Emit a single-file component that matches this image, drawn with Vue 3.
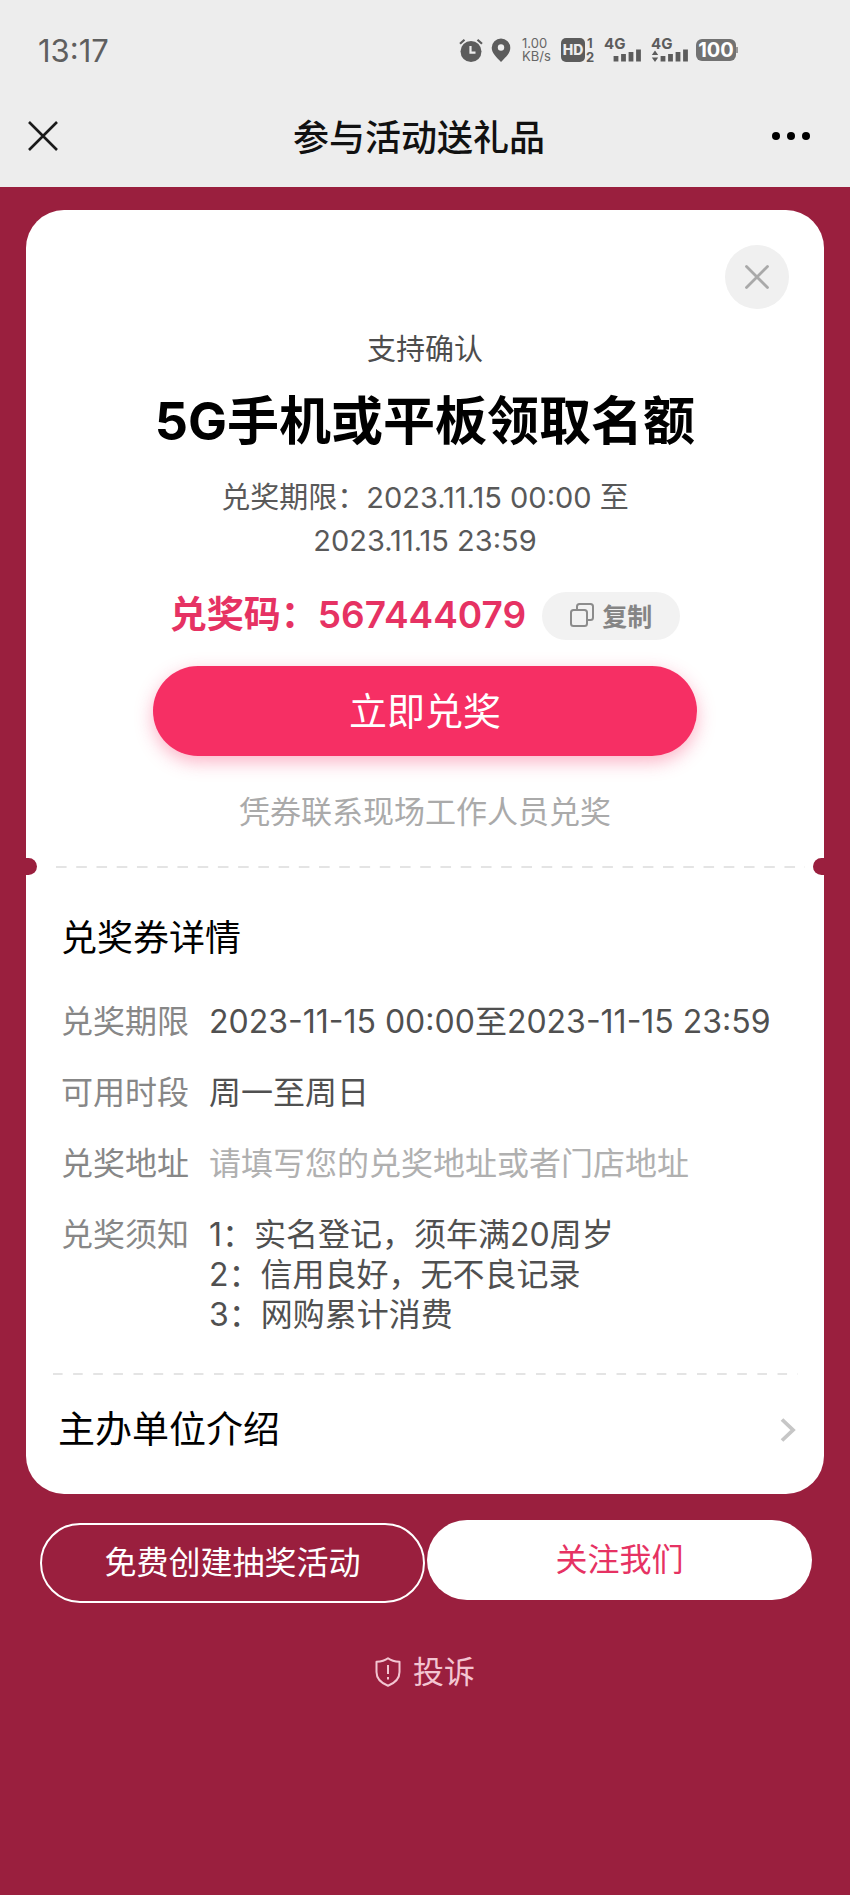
<script setup>
const details = [
  { label: '兑奖期限', lines: ['2023-11-15 00:00至2023-11-15 23:59'], kind: 'plain' },
  { label: '可用时段', lines: ['周一至周日'], kind: 'plain' },
  { label: '兑奖地址', lines: ['请填写您的兑奖地址或者门店地址'], kind: 'muted' },
  {
    label: '兑奖须知',
    lines: ['1：实名登记，须年满20周岁', '2：信用良好，无不良记录', '3：网购累计消费'],
    kind: 'plain'
  }
]
</script>

<template>
  <div class="page">
    <header class="top">
      <div class="status">
        <span class="clock">13:17</span>
        <div class="indicators">
          <svg class="alarm" viewBox="0 0 24 24" width="24" height="24" aria-hidden="true">
            <circle cx="12" cy="13.500" r="10.500" fill="#5c5c5c" />
            <path d="M1 5.800 5.500 1.800M23 5.800 18.500 1.800" stroke="#5c5c5c" stroke-width="2.200" fill="none" />
            <path d="M11.500 8v6.700h5" stroke="#ededed" stroke-width="2.200" fill="none" />
          </svg>
          <svg class="pin" viewBox="0 0 20 24" width="20" height="24" aria-hidden="true">
            <path d="M10 .5a9.300 9.300 0 0 0-9.300 9.300C.7 15.500 6 19.500 10 24c4-4.500 9.300-8.500 9.300-14.200A9.300 9.300 0 0 0 10 .5z" fill="#5c5c5c" />
            <circle cx="10" cy="9.500" r="3.200" fill="#ededed" />
          </svg>
          <span class="speed"><span>1.00</span><span>KB/s</span></span>
          <svg class="hd" viewBox="0 -4 36 32" width="36" height="32">
            <rect x="0" y="0" width="24" height="24" rx="5" fill="#5c5c5c" />
            <text x="12" y="17" text-anchor="middle" class="hd-label">HD</text>
            <text x="26" y="10" class="sim">1</text>
            <text x="25" y="24" class="sim">2</text>
          </svg>
          <svg class="signal" viewBox="0 -4 38 32" width="38" height="32">
            <text x="0" y="11" class="net">4G</text>
            <path d="M12 18v5.500M19.500 16v7.500M27 14v9.500M34.500 11.500v12" stroke="#5c5c5c" stroke-width="4.800" />
          </svg>
          <svg class="signal" viewBox="0 -4 38 32" width="38" height="32">
            <text x="0" y="11" class="net">4G</text>
            <path d="M4 12.500.8 17h6.400zM4 24 .8 19.500h6.400z" fill="#5c5c5c" />
            <path d="M12 18v5.500M19.500 16v7.500M27 14v9.500M34.500 11.500v12" stroke="#5c5c5c" stroke-width="4.800" />
          </svg>
          <span class="battery">100</span>
        </div>
      </div>
      <div class="nav">
        <button class="nav-close" type="button" aria-label="关闭">
          <svg viewBox="0 0 30 30" width="30" height="30"><path d="M1 1l28 28M29 1 1 29" stroke="#1a1a1a" stroke-width="2.600" /></svg>
        </button>
        <h1>参与活动送礼品</h1>
        <button class="nav-more" type="button" aria-label="更多">
          <svg viewBox="0 0 38 8" width="38" height="8"><circle cx="4" cy="4" r="4" /><circle cx="19" cy="4" r="4" /><circle cx="34" cy="4" r="4" /></svg>
        </button>
      </div>
    </header>

    <main>
      <article class="card">
        <section class="coupon">
          <button class="dismiss" type="button" aria-label="关闭">
            <svg viewBox="0 0 24 24" width="24" height="24"><path d="M1.500 1.500l21 21M22.500 1.500l-21 21" stroke="#a9a9a9" stroke-width="2.800" stroke-linecap="round" /></svg>
          </button>
          <p class="kicker">支持确认</p>
          <h2>5G手机或平板领取名额</h2>
          <p class="period">兑奖期限：2023.11.15 00:00 至<br />2023.11.15 23:59</p>
          <div class="code-row">
            <span class="code">兑奖码：567444079</span>
            <button class="copy" type="button">
              <svg viewBox="0 0 24 24" width="24" height="24" fill="none" stroke="#8c8c8c" stroke-width="2">
                <rect x="1" y="7" width="16" height="16" rx="2.500" />
                <path d="M7 7V3.500Q7 1 9.500 1h11Q23 1 23 3.500v11q0 2.500-2.500 2.500H17" />
              </svg>
              复制
            </button>
          </div>
          <button class="redeem" type="button">立即兑奖</button>
          <p class="hint">凭券联系现场工作人员兑奖</p>
        </section>

        <div class="tear"><div class="dashes"></div></div>

        <section class="details">
          <h3>兑奖券详情</h3>
          <dl>
            <div v-for="row in details" :key="row.label" class="row">
              <dt>{{ row.label }}</dt>
              <dd :class="row.kind"><span v-for="line in row.lines" :key="line">{{ line }}</span></dd>
            </div>
          </dl>
        </section>

        <div class="dashes lower"></div>

        <a class="host" href="#host">
          <span>主办单位介绍</span>
          <svg viewBox="0 0 16 24" width="16" height="24"><path d="M2 1.500 13 12 2 22.500" fill="none" stroke="#c6c6c6" stroke-width="3.800" /></svg>
        </a>
      </article>

      <div class="actions">
        <button class="create" type="button">免费创建抽奖活动</button>
        <button class="follow" type="button">关注我们</button>
      </div>

      <a class="report" href="#report">
        <svg viewBox="0 0 26 30" width="26" height="30" fill="none" stroke="#f3c5d1" stroke-width="2">
          <path d="M13 1.200C10 3.500 5.500 4.600 1.500 4.800V15c0 6.500 4.500 11 11.500 13.800C20 26 24.500 21.500 24.500 15V4.800C20.500 4.600 16 3.500 13 1.200z" stroke-linejoin="round" />
          <path d="M13 8v9M13 20v2.500" />
        </svg>
        投诉
      </a>
    </main>
  </div>
</template>

<style>
body {
  margin: 0;
  background: #9a1f3e;
}
</style>

<style scoped>
.page {
  min-height: 100vh;
  background: #9a1f3e;
  color: #000;
  font-family: Inter, "Noto Sans CJK SC", sans-serif;
}
h1, h2, h3, p, dl, dd { margin: 0; }
button {
  padding: 0;
  border: 0;
  background: none;
  font-family: inherit;
  cursor: pointer;
}
a { text-decoration: none; }
svg { display: block; flex: none; }

.top {
  background: #ededed;
  padding-bottom: 15px;
}
.status {
  display: flex;
  align-items: center;
  justify-content: space-between;
  height: 100px;
  padding: 0 114px 0 38px;
}
.clock {
  color: #5f5f5f;
  font-size: 31px;
}
.indicators {
  display: flex;
  align-items: center;
}
.pin { margin-left: 8px; }
.speed {
  display: flex;
  flex-direction: column;
  width: 34px;
  margin-left: 11px;
  color: #666;
  font-size: 13px;
  line-height: 13px;
}
.hd { margin-left: 5px; }
.signal { margin-left: 7px; }
.signal + .signal { margin-left: 9px; }
.hd-label {
  fill: #ededed;
  font-size: 14px;
  font-weight: 800;
}
.sim {
  fill: #5c5c5c;
  font-size: 13px;
  font-weight: 700;
}
.net {
  fill: #5c5c5c;
  font-size: 15px;
  font-weight: 700;
}
.battery {
  position: relative;
  width: 40px;
  margin-left: 7px;
  border-radius: 6px;
  background: #727272;
  color: #fff;
  font-size: 20px;
  font-weight: 700;
  line-height: 22px;
  text-align: center;
}
.battery::after {
  content: "";
  position: absolute;
  top: 8px;
  right: -2px;
  width: 2px;
  height: 6px;
  background: #999;
}
.nav {
  display: flex;
  align-items: center;
  justify-content: space-between;
  height: 72px;
  padding: 0 40px 0 28px;
}
.nav-close,
.nav-more { width: 38px; }
h1 {
  padding-top: 4px;
  color: #111;
  font-size: 36px;
  font-weight: 500;
  line-height: 52px;
}

main { padding: 23px 26px; }
.card {
  border-radius: 38px;
  background: #fff;
}
.coupon {
  display: flex;
  flex-direction: column;
  align-items: center;
  padding-top: 35px;
}
.dismiss {
  display: flex;
  align-items: center;
  justify-content: center;
  align-self: flex-end;
  width: 64px;
  height: 64px;
  margin-right: 35px;
  border-radius: 50%;
  background: #f0f0f0;
}
.kicker {
  margin-top: 19px;
  color: #4d4d4d;
  font-size: 29px;
  line-height: 43px;
}
h2 {
  margin-top: 15px;
  font-size: 52px;
  font-weight: 700;
  line-height: 72px;
}
.period {
  margin-top: 18px;
  color: #595959;
  font-size: 29px;
  line-height: 43px;
  text-align: center;
}
.code-row {
  display: flex;
  align-items: center;
  gap: 16px;
  margin-top: 30px;
}
.code {
  padding-bottom: 2px;
  color: #e63263;
  font-size: 37px;
  font-weight: 600;
  line-height: 44px;
}
.copy {
  display: flex;
  align-items: center;
  justify-content: center;
  gap: 8px;
  width: 138px;
  height: 48px;
  padding-bottom: 2px;
  border-radius: 24px;
  background: #f2f2f2;
  color: #858585;
  font-size: 25px;
  font-weight: 700;
}
.redeem {
  width: 544px;
  max-width: 90%;
  height: 90px;
  margin-top: 26px;
  padding-bottom: 6px;
  border-radius: 45px;
  background: #f62f64;
  box-shadow: 0 6px 18px rgba(246, 47, 100, 0.36);
  color: #fff;
  font-size: 38px;
}
.hint {
  margin-top: 34px;
  color: #aaa;
  font-size: 31px;
  line-height: 44px;
}
.tear {
  position: relative;
  overflow: hidden;
  margin-top: 24px;
  padding: 8px 19px 8px 30px;
}
.tear::before,
.tear::after {
  content: "";
  position: absolute;
  top: 0;
  width: 22px;
  height: 17px;
  border-radius: 9px;
  background: #9a1f3e;
}
.tear::before { left: -11px; }
.tear::after { right: -11px; }
.dashes {
  height: 2px;
  background: linear-gradient(90deg, #e4e4e4 50%, transparent 50%) 0 0 / 20px 2px round;
}
.lower { margin: 38px 26px 0 27px; }

.details { padding: 36px 35px 0; }
h3 {
  font-size: 36px;
  font-weight: 400;
  line-height: 52px;
}
dl {
  display: grid;
  gap: 31px;
  margin-top: 38px;
}
.row {
  display: flex;
  font-size: 32px;
  line-height: 40px;
}
dt {
  flex: none;
  width: 148px;
  color: #878787;
}
dd {
  display: flex;
  flex-direction: column;
  color: #505050;
}
.muted { color: #b0b0b0; }
.host {
  display: flex;
  align-items: center;
  justify-content: space-between;
  padding: 28px 28px 37px 32px;
  color: #000;
  font-size: 37px;
  line-height: 54px;
}
.actions {
  display: grid;
  grid-template-columns: 1fr 1fr;
  align-items: start;
  gap: 2px;
  margin: 26px 12px 0 14px;
}
.actions button {
  box-sizing: border-box;
  min-width: 0;
  height: 80px;
  padding-bottom: 6px;
  border-radius: 40px;
  font-size: 32px;
}
.actions .create {
  margin-top: 3px;
  border: 2px solid #fff;
  color: #fff;
}
.actions .follow {
  background: #fff;
  color: #e63263;
}
.report {
  display: flex;
  align-items: center;
  justify-content: center;
  gap: 12px;
  margin-top: 46px;
  color: #f3c5d1;
  font-size: 31px;
  line-height: 46px;
}
</style>
